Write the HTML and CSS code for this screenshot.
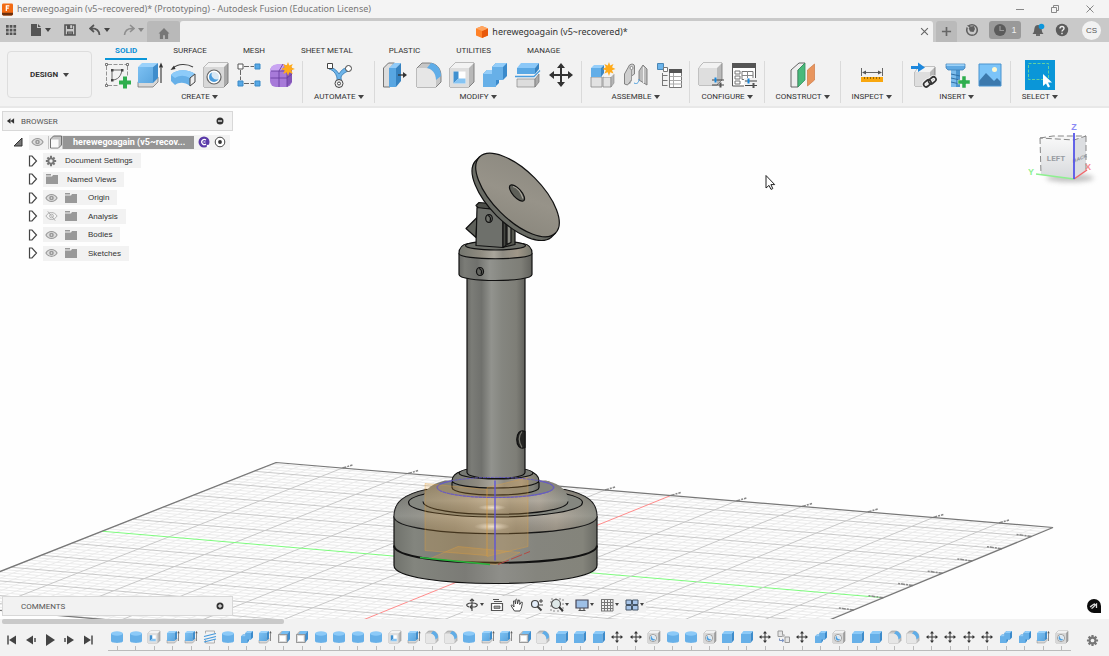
FILE: index.html
```html
<!DOCTYPE html>
<html lang="en">
<head>
<meta charset="utf-8">
<title>herewegoagain (v5~recovered)* (Prototyping) - Autodesk Fusion (Education License)</title>
<link rel="stylesheet" href="styles.css">
</head>
<body>
<svg class="sprite" aria-hidden="true">
  <defs>
    <linearGradient id="gBlue" x1="0" y1="0" x2="1" y2="1"><stop offset="0" stop-color="#7cc0f2"/><stop offset="1" stop-color="#5ba6df"/></linearGradient>
  </defs>
  <symbol id="i-sketch" viewBox="0 0 28 28">
    <path d="M5 3.500h18M3.500 5v18M5 24.500h11M24.500 5v10" fill="none" stroke="#888" stroke-width=".9" stroke-dasharray="4 1.500"/>
    <path d="M2.500 2.500h2v2h-2zM23.500 2.500h2v2h-2zM2.500 23.500h2v2h-2z" fill="#fff" stroke="#666" stroke-width=".9"/>
    <path d="M9 9h10c-1 6-4 10-10 10z" fill="none" stroke="#666" stroke-width="1"/>
    <path d="M8 8h2.500v2.500H8zM18 8h2.500v2.500H18zM8 18h2.500v2.500H8z" fill="#444"/>
    <path d="M20 15.500h4v4h4v4h-4v4h-4v-4h-4v-4h4z" fill="#2fae4e"/>
  </symbol>
  <symbol id="i-extrude" viewBox="0 0 28 28">
    <path d="M2 21l4-5h16v5l-5 5H2z" fill="#d8d8d8" stroke="#777" stroke-width=".8"/>
    <path d="M2 6h15v16H2z" fill="url(#gBlue)"/><path d="M2 6l4-4h16l-5 4z" fill="#9bd2fb"/><path d="M17 6l5-4v15l-5 5z" fill="#3e8dcc"/>
    <path d="M25 22V4M23.500 6.500l1.500-3.500 1.500 3.500" fill="none" stroke="#333" stroke-width="1.100"/>
  </symbol>
  <symbol id="i-revolve" viewBox="0 0 28 28">
    <path d="M2 14C7 8 19 8 26 13l-5 3v9C16 21 10 21 6 24L2 20z" fill="#67b0e8"/>
    <path d="M2 14C7 8 19 8 26 13l-5 4C15 14 11 14 6 17z" fill="#8dcbf9"/>
    <path d="M21 17l5-4v8l-5 4z" fill="#eee" stroke="#444"/>
    <path d="M4 7c5-4.500 14-4.500 20-1" fill="none" stroke="#444" stroke-width="1.200"/><path d="M1.500 9L5 4.500 6.500 8z" fill="#333"/>
  </symbol>
  <symbol id="i-hole" viewBox="0 0 28 28">
    <path d="M2 6l4-4h20v20l-4 4H2z" fill="#a8a8a8" stroke="#777" stroke-width=".9"/>
    <path d="M2 6h20v20H2z" fill="#d8d8d8"/><path d="M2 6l4-4h20l-4 4z" fill="#f1f1f1"/>
    <circle cx="12" cy="16" r="7" fill="#fff" stroke="#666" stroke-width="1.200"/><circle cx="12" cy="16" r="5" fill="#d9e8f4"/><path d="M10 11.400a5 5 0 0 0 6.600 6.600 5 5 0 0 1-6.600 2.500 5 5 0 0 1 0-9.100z" fill="#4b9ddd"/>
  </symbol>
  <symbol id="i-pattern" viewBox="0 0 28 28">
    <path d="M9 5.500h10M5.500 9v10M9 22.500h10" stroke="#666" stroke-dasharray="5 1.500" fill="none"/>
    <path d="M3 3h5v5H3z" fill="#fff" stroke="#555"/><path d="M20 3h5v5h-5zM3 20h5v5H3zM20 20h5v5h-5z" fill="#58a9e6" stroke="#3b89c6"/>
  </symbol>
  <symbol id="i-form" viewBox="0 0 28 28">
    <rect x="2" y="4" width="22" height="22" rx="6" fill="#a77ad9"/><path d="M2 11c0-6 4-8 9-8h6l-4 7H3z" fill="#c9a5f2"/><path d="M19 10l5-4v15l-5 5z" fill="#8456b8"/>
    <path d="M2.500 17h16.500l5-4M11 10v16M3 10h16v16M11 10l4-7" fill="none" stroke="#6b3fa0" stroke-width=".9"/>
    <path d="M20 1l1.300 3.600 3.500-1.600-1.500 3.500L27 8l-3.700 1.300 1.500 3.600-3.500-1.600L20 15l-1.300-3.700-3.500 1.600 1.500-3.600L13 8l3.700-1.500L15.200 3l3.500 1.600z" fill="#ffab1a"/>
  </symbol>
  <symbol id="i-automate" viewBox="0 0 28 28">
    <path d="M4 5c4 2 8 4 10 8 2-3 4-6 8-6l1 3c-4 2-7 4-7 7l1 6h-5l0-6C11 12 8 9 4 8z" fill="#6db4e9" stroke="#3b7fb5" stroke-width=".9"/>
    <path d="M2.500 2.500h5v5h-5z" fill="#fff" stroke="#444"/><circle cx="23.500" cy="7.500" r="3" fill="#fff" stroke="#444"/><circle cx="14" cy="22.500" r="4" fill="#eee" stroke="#444"/><circle cx="14" cy="22.500" r="1.500" fill="#fff" stroke="#444"/>
  </symbol>
  <symbol id="i-presspull" viewBox="0 0 28 28">
    <path d="M1.500 7l5-5h6L8 7v19H1.500z" fill="#ddd" stroke="#666" stroke-width=".9"/>
    <path d="M7 7h7v19H7z" fill="#58a6e2"/><path d="M7 7l5-5h7l-5 5z" fill="#8fcaf8"/><path d="M14 7l5-5v18l-5 6z" fill="#3682c0"/>
    <path d="M16 14h7" stroke="#333" stroke-width="1.300"/><path d="M21 11l4 3-4 3z" fill="#333"/>
  </symbol>
  <symbol id="i-fillet" viewBox="0 0 28 28">
    <path d="M2 26V7l5-5h7c7 0 12 5 12 13v6l-5 5z" fill="#c7c7c7" stroke="#777" stroke-width=".9"/>
    <path d="M2 7h8c7 0 11 5 11 12v7H2z" fill="#e6e6e6"/><path d="M12 7l4-5c6 1 10 6 10 13l-5 4C21 12 17 8 12 7z" fill="#5fade8"/>
  </symbol>
  <symbol id="i-shell" viewBox="0 0 28 28">
    <path d="M2 7l5-5h19v19l-5 5H2z" fill="#b8b8b8" stroke="#777" stroke-width=".9"/><path d="M2 7h19v19H2z" fill="#dedede"/><path d="M2 7l5-5h19l-5 5z" fill="#f3f3f3"/>
    <path d="M5.500 10.500h12v12h-12z" fill="#fff"/><path d="M5.500 10.500h5v7l-5 5z" fill="#3f90d0"/><path d="M10.500 17.500h7v5h-12z" fill="#86c4f3"/>
  </symbol>
  <symbol id="i-combine" viewBox="0 0 28 28">
    <path d="M2 13l4-4h5V6l4-4h11v13l-4 4h-4v3l-4 4H2z" fill="#3b8acb"/>
    <path d="M2 13h9V6h11v13h-7v7H2z" fill="#67b0e8"/><path d="M2 13l4-4h5v4zM11 6l4-4h11l-4 4z" fill="#93cdf9"/>
  </symbol>
  <symbol id="i-split" viewBox="0 0 28 28">
    <path d="M3 7h18v6H3z" fill="#5aa8e4"/><path d="M3 7l4-5h18l-4 5z" fill="#8bc8f8"/><path d="M21 7l4-5v6l-4 5z" fill="#3683c2"/>
    <path d="M1 15.500h19l6-6" fill="none" stroke="#4a9ddd" stroke-width="1.300"/>
    <path d="M3 18h18v8H3z" fill="#ddd" stroke="#888" stroke-width=".7"/><path d="M21 18l4-5v8l-4 5z" fill="#aaa" stroke="#777" stroke-width=".7"/>
  </symbol>
  <symbol id="i-move" viewBox="0 0 28 28">
    <path d="M14 5v18M5 14h18" stroke="#333" stroke-width="2"/><path d="M14 2l4 5h-8zM14 26l4-5h-8zM2 14l5-4v8zM26 14l-5-4v8z" fill="#333"/>
  </symbol>
  <symbol id="i-component" viewBox="0 0 28 28">
    <path d="M2 16h11v10H2zM14 16h8v10h-8z" fill="#e2e2e2" stroke="#888" stroke-width=".8"/><path d="M22 16l3-3v9l-3 4z" fill="#b5b5b5" stroke="#888" stroke-width=".6"/><path d="M14 16l3-3h8l-3 3z" fill="#f4f4f4"/>
    <path d="M2 7h10v9H2z" fill="#62aee8"/><path d="M2 7l3-3h10l-3 3z" fill="#95cefa"/><path d="M12 7l3-3v8l-3 4z" fill="#3a87c6"/>
    <path d="M20 1l1.200 3.500 3.300-1.500L23 6.300 26.500 8 23 9.300l1.500 3.200-3.300-1.200L20 15l-1.300-3.700-3.300 1.200 1.500-3.200L13.500 8l3.400-1.700L15.400 3l3.300 1.500z" fill="#ffab1a"/>
  </symbol>
  <symbol id="i-joint" viewBox="0 0 28 28">
    <path d="M2.500 23V13l5-9c2-1.500 5-1 5 1v8l-3 2v4l-4 5z" fill="#cfcfcf" stroke="#777" stroke-width=".9"/><path d="M7.500 23l2-4V9" fill="none" stroke="#999"/><circle cx="9.500" cy="7" r="1.500" fill="#fff" stroke="#777" stroke-width=".8"/>
    <path d="M25 24V8l-4-4-4 6v9z" fill="#bdbdbd" stroke="#777" stroke-width=".9"/><path d="M21.500 6v16" stroke="#eee"/><path d="M12 22c4 2 5-2 5-4" fill="none" stroke="#4a9ddd"/>
  </symbol>
  <symbol id="i-bom" viewBox="0 0 28 28">
    <path d="M2.500 2.500h6v6h-6z" fill="#6cb5ec" stroke="#4a86b4"/><path d="M8.500 6.500h4v4h-4z" fill="#fff" stroke="#777"/>
    <path d="M7.500 12v13M7.500 14.500h5M7.500 19.500h5M7.500 24.500h5" stroke="#777" fill="none"/>
    <path d="M14.500 8.500h12v18h-12z" fill="#fff" stroke="#777"/><path d="M14 8h13v4H14z" fill="#555"/><path d="M15 15.500h12M15 19.500h12M15 23h12M18.500 12v14" stroke="#aaa"/>
  </symbol>
  <symbol id="i-config" viewBox="0 0 28 28">
    <path d="M2 7l4-5h19v17l-5 5H2z" fill="#bababa" stroke="#777" stroke-width=".8"/><path d="M2 7h18v17H2z" fill="#dedede"/><path d="M2 7l4-5h19l-5 5z" fill="#f2f2f2"/>
    <path d="M15 19h12M15 24h12" stroke="#444" stroke-width="1.200"/><path d="M18.500 16.500v5" stroke="#1687dc" stroke-width="2"/><path d="M23.500 21.500v5" stroke="#555" stroke-width="2"/>
  </symbol>
  <symbol id="i-table" viewBox="0 0 28 28">
    <path d="M2.500 3v22h23V3z" fill="#fff" stroke="#555"/><path d="M2 2h24v5H2z" fill="#555"/><path d="M5 10h5v3H5zM5 15h5v3H5zM5 20h5v3H5zM12 10.500h11v8H12z" fill="none" stroke="#777"/><path d="M12 14.500h11M17.500 10v8" stroke="#888"/>
    <path d="M14 17h13v11H14z" fill="#f2f2f2"/><path d="M15 20h12M15 24.500h12" stroke="#444" stroke-width="1.200"/><path d="M18.500 17.500v5" stroke="#1687dc" stroke-width="2"/><path d="M23.500 22v5" stroke="#555" stroke-width="2"/>
  </symbol>
  <symbol id="i-plane" viewBox="0 0 28 28">
    <path d="M2 9l8-7h6l-7 7v17H2z" fill="#eee" stroke="#555" stroke-width=".9"/><path d="M9 9l7-7v17l-7 7z" fill="#49b97b" stroke="#35915e" stroke-width=".8"/><path d="M18.500 9l7-6v16l-7 6z" fill="#e8955e" stroke="#cf7a45" stroke-width=".7"/>
  </symbol>
  <symbol id="i-measure" viewBox="0 0 28 28">
    <path d="M3.500 7v8M24.500 7v8M5 11.500h18" stroke="#666" fill="none"/><path d="M4 11.500l4-2v4zM24 11.500L20 9.500v4z" fill="#555"/>
    <path d="M3 16h22v5H3z" fill="#f9a70e"/><path d="M6.500 16v2M9.500 16v2M12.500 16v2M15.500 16v2M18.500 16v2M21.500 16v2" stroke="#9a6800"/>
  </symbol>
  <symbol id="i-derive" viewBox="0 0 28 28">
    <path d="M5 11l4-5h16v15l-5 4H5z" fill="#b8b8b8" stroke="#777" stroke-width=".8"/><path d="M5 11h15v14H5z" fill="#dedede"/><path d="M5 11l4-5h16l-5 5z" fill="#f3f3f3"/>
    <path d="M1 5h7V1.500L15 6.500 8 11V8H1z" fill="#1e88dd"/>
    <g fill="none" stroke="#f2f2f2" stroke-width="4"><rect x="13" y="20" width="8" height="5" rx="2.500" transform="rotate(-40 17 22)"/><rect x="18" y="17" width="8" height="5" rx="2.500" transform="rotate(-40 22 19)"/></g>
    <g fill="none" stroke="#333" stroke-width="1.700"><rect x="13" y="20" width="8" height="5" rx="2.500" transform="rotate(-40 17 22)"/><rect x="18" y="17" width="8" height="5" rx="2.500" transform="rotate(-40 22 19)"/></g>
  </symbol>
  <symbol id="i-fastener" viewBox="0 0 28 28">
    <path d="M8 8h9v18H8z" fill="#7dbdec"/><path d="M13 8h4v18h-4z" fill="#4b95cf"/><path d="M8 13l9 2M8 17l9 2M8 21l9 2" stroke="#2f6fa5"/>
    <path d="M3 3h19v4l-2 2H5L3 7z" fill="#60a9e2" stroke="#387ab2" stroke-width=".7"/><path d="M3.500 3.300h18v1.700h-18z" fill="#9dd1f7"/>
    <path d="M19 15h4v4h4v4h-4v4h-4v-4h-4v-4h4z" fill="#2fae4e" stroke="#f2f2f2" stroke-width=".5"/>
  </symbol>
  <symbol id="i-image" viewBox="0 0 28 28">
    <path d="M3 3h22v22H3z" fill="#7cc4f8"/><path d="M3 20l7-8 8 8 3-3 4 4v4H3z" fill="#3c79ad"/><circle cx="18.500" cy="8.500" r="2.500" fill="#fff8cf"/><path d="M3 3h22v22H3z" fill="none" stroke="#4a94cf"/>
  </symbol>
  <symbol id="i-cube" viewBox="0 0 28 28"><path d="M2 8h19v18H2z" fill="#67b0e8"/><path d="M2 8l5-6h19l-5 6z" fill="#8ccaf8"/><path d="M21 8l5-6v18l-5 6z" fill="#3c8bcb"/></symbol>
  <symbol id="i-cyl" viewBox="0 0 28 28"><path d="M2 7v15c0 5 24 5 24 0V7z" fill="#67b0e8"/><ellipse cx="14" cy="7" rx="12" ry="4.500" fill="#8ccaf8"/></symbol>
  <symbol id="i-thread" viewBox="0 0 28 28"><path d="M5 2h18M5 26h18M5 2v5M23 2v5M5 20v6M23 20v6" stroke="#999" stroke-width="1.500" fill="none"/><path d="M2 13l24-6M2 19l24-6M2 24l24-6" stroke="#4499dd" stroke-width="2.500"/></symbol>
  <symbol id="i-frame" viewBox="0 0 28 28"><path d="M2 9l7-7h17v16l-6 8H2z" fill="#bbb"/><path d="M11 2h15l-6 7H6z" fill="#77bef3"/><path d="M20 9l6-7v16l-6 7z" fill="#3f8ed0"/><path d="M3 9h17v16H3z" fill="#ddd" stroke="#888" stroke-width="1.500"/><path d="M6 12h11v10H6z" fill="#fff"/></symbol>
  <symbol id="i-asbuilt" viewBox="0 0 28 28"><path d="M2 2h9v11H2zM16 14h9v11h-9z" fill="#e5e5e5" stroke="#999" stroke-width="2"/><circle cx="13" cy="11" r="3" fill="#bbb"/><path d="M5 17v4h8M10 18l4 3-4 3" fill="none" stroke="#7992c2" stroke-width="2"/></symbol>
  <symbol id="i-eye" viewBox="0 0 14 10"><path d="M1 5c3-5 9-5 12 0-3 5-9 5-12 0z" fill="#ddd" stroke="#999" stroke-width="1.200"/><circle cx="7" cy="5" r="2.500" fill="#999"/><circle cx="7" cy="5" r=".8" fill="#eee"/></symbol>
  <symbol id="i-eyeoff" viewBox="0 0 14 10"><path d="M1 5c3-5 9-5 12 0-3 5-9 5-12 0z" fill="#f4f4f4" stroke="#aaa"/><circle cx="7" cy="5" r="2" fill="none" stroke="#aaa"/><path d="M3 0l8 10" stroke="#aaa"/></symbol>
  <symbol id="i-folder" viewBox="0 0 14 12"><path d="M1 1h5v1.500H1zM1 3.500h6l1-1.500h5v9H1z" fill="#999"/></symbol>
  <symbol id="i-gear" viewBox="0 0 14 14"><g stroke="#777" stroke-width="2.400"><path d="M7 1v12M1 7h12M2.800 2.800l8.400 8.400M11.200 2.800l-8.400 8.400"/></g><circle cx="7" cy="7" r="4.200" fill="#777"/><circle cx="7" cy="7" r="2" fill="#f2f2f2"/></symbol>
  <symbol id="i-tri" viewBox="0 0 10 12"><path d="M1.500 1h2.500l4.500 5-4.500 5H1.500z" fill="#fff" stroke="#444" stroke-width="1.200"/></symbol>
</svg>

<header class="titlebar">
  <svg class="app-icon" viewBox="0 0 12 13"><rect x="0" y="0" width="12" height="13" rx="1.500" fill="#f26a13"/><path d="M0 10h12v1.500a1.500 1.500 0 0 1-1.500 1.500h-9A1.500 1.500 0 0 1 0 11.500z" fill="#6d2f0c"/><path d="M4.700 8V2.500H8M4.700 5h2.700" stroke="#fff" stroke-width="1.300" fill="none"/></svg>
  <h1 class="window-title">herewegoagain (v5~recovered)* (Prototyping) - Autodesk Fusion (Education License)</h1>
  <div class="window-controls">
    <button aria-label="Minimize"><svg viewBox="0 0 10 10"><path d="M1 5.500h8"/></svg></button>
    <button aria-label="Restore"><svg viewBox="0 0 10 10"><path d="M1.500 3.500h5v5h-5zM3.500 3V1.500h5v5H7"/></svg></button>
    <button aria-label="Close"><svg viewBox="0 0 10 10"><path d="M1.500 1.500l7 7M8.500 1.500l-7 7"/></svg></button>
  </div>
</header>

<div class="tabbar">
  <div class="quick">
    <button aria-label="Data panel"><svg viewBox="0 0 12 12"><path d="M1 1h2.700v2.700H1zM4.700 1h2.700v2.700H4.700zM8.400 1h2.700v2.700H8.400zM1 4.700h2.700v2.700H1zM4.700 4.700h2.700v2.700H4.700zM8.400 4.700h2.700v2.700H8.400zM1 8.400h2.700v2.700H1zM4.700 8.400h2.700v2.700H4.700zM8.400 8.400h2.700v2.700H8.400z" fill="#555"/></svg></button>
    <button aria-label="File"><svg viewBox="0 0 12 12"><path d="M1 0h6v4h4v8H1zM8 0l3 3H8z" fill="#555"/></svg><i class="caret"></i></button>
    <button aria-label="Save"><svg viewBox="0 0 12 12"><path d="M1 1h10v10H1z" fill="none" stroke="#555" stroke-width="1.600"/><path d="M3 1h6v4H3zM3 7.500h6V11H3z" fill="#555"/><path d="M6.500 1.500H8V4H6.500zM4 9h4" fill="#ccc" stroke="#ccc" stroke-width=".6"/></svg></button>
    <button aria-label="Undo"><svg viewBox="0 0 12 12"><path d="M5 1L1 4.500 5 8M1.500 4.500C7 4 10 6 10.500 11" fill="none" stroke="#555" stroke-width="1.700"/></svg><i class="caret"></i></button>
    <button class="faded" aria-label="Redo"><svg viewBox="0 0 12 12"><path d="M7 1l4 3.500L7 8M10.500 4.500C5 4 2 6 1.500 11" fill="none" stroke="#555" stroke-width="1.600"/></svg><i class="caret"></i></button>
  </div>
  <button class="home-tab" aria-label="Home"><svg viewBox="0 0 12 12"><path d="M6 0l6 6h-1.500v6H7V8H5v4H1.500V6H0z" fill="#777"/></svg></button>
  <div class="doc-tab">
    <div class="doc-name"><svg viewBox="0 0 12 12"><path d="M6 0l6 2.500v7L6 12 0 9.500v-7z" fill="#ff8228"/><path d="M6 5l6-2.500v7L6 12z" fill="#e8590c"/><path d="M6 0l6 2.500L6 5 0 2.500z" fill="#ffa45f"/></svg><span>herewegoagain (v5~recovered)*</span></div>
    <button class="doc-close" aria-label="Close document"><svg viewBox="0 0 8 8"><path d="M1 1l6 6M7 1L1 7" stroke="#666" stroke-width="1"/></svg></button>
  </div>
  <div class="status">
    <button class="new-tab" aria-label="New tab"><svg viewBox="0 0 12 12"><path d="M6 1v10M1 6h10" stroke="#666" stroke-width="1.800"/></svg></button>
    <button aria-label="Extensions"><svg viewBox="0 0 14 14"><circle cx="7" cy="7" r="5.300" fill="none" stroke="#606060" stroke-width="1.600"/><path d="M2 2l4 1.500 3-.5 1 3-1.500 3L5 8.500 4 6z" fill="#606060"/><path d="M1 2.500L4 5M8 11l2-2" stroke="#c9c9c9" stroke-width="1.500"/></svg></button>
    <button class="jobs" aria-label="Job status"><svg viewBox="0 0 14 14"><circle cx="7" cy="7" r="6" fill="#5b5b5b"/><path d="M7 3v4.500h4" fill="none" stroke="#999" stroke-width="1.200"/></svg><span>1</span></button>
    <button aria-label="Notifications"><svg viewBox="0 0 14 14"><path d="M1.500 11c2-2 1.500-4 2-6C4 3 5 2 7 2s3 1 3.500 3c.5 2 0 4 2 6z" fill="#606060"/><path d="M5 12h4" stroke="#606060" stroke-width="1.800"/><circle cx="10.500" cy="3.500" r="2.800" fill="#0d96dc"/></svg></button>
    <button aria-label="Help"><svg viewBox="0 0 14 14"><circle cx="7" cy="7" r="6.200" fill="#5b5b5b"/><path d="M5 5.500c0-2.600 4-2.600 4 0 0 1.500-2 1.500-2 3M7 9.700v1.500" fill="none" stroke="#eee" stroke-width="1.400"/></svg></button>
    <button class="avatar">CS</button>
  </div>
</div>

<div class="ribbon">
  <button class="workspace">DESIGN<i class="caret"></i></button>
  <div class="ribbon-main">
    <nav class="ribbon-tabs">
      <a class="active" href="#solid">SOLID</a><a href="#surface">SURFACE</a><a href="#mesh">MESH</a><a href="#sheet">SHEET METAL</a><a href="#plastic">PLASTIC</a><a href="#utilities">UTILITIES</a><a href="#manage">MANAGE</a>
    </nav>
    <div class="groups" id="groups"></div>
  </div>
</div>

<main class="viewport">
  <svg class="scene" viewBox="0 107 1109 512" preserveAspectRatio="xMidYMid slice" role="img" aria-label="Lamp stand model on a ground grid">
    <defs>
      <linearGradient id="m-col"><stop offset="0" stop-color="#696a66"/><stop offset=".08" stop-color="#7b7c77"/><stop offset=".25" stop-color="#70716d"/><stop offset=".42" stop-color="#92938e"/><stop offset=".6" stop-color="#858680"/><stop offset=".85" stop-color="#7e7e77"/><stop offset="1" stop-color="#62625d"/></linearGradient>
      <linearGradient id="m-base"><stop offset="0" stop-color="#70726c"/><stop offset=".1" stop-color="#83857e"/><stop offset=".35" stop-color="#7b7b76"/><stop offset=".52" stop-color="#8e8e89"/><stop offset=".7" stop-color="#85857e"/><stop offset=".93" stop-color="#84847b"/><stop offset="1" stop-color="#696a64"/></linearGradient>
      <linearGradient id="m-dome"><stop offset="0" stop-color="#74766f"/><stop offset=".3" stop-color="#8f8b80"/><stop offset=".48" stop-color="#aaa69c"/><stop offset=".6" stop-color="#8e8b82"/><stop offset=".8" stop-color="#a09788"/><stop offset="1" stop-color="#77786e"/></linearGradient>
      <linearGradient id="m-shade" x2="0" y2="1"><stop offset="0" stop-color="#555" stop-opacity=".25"/><stop offset=".6" stop-color="#fff" stop-opacity=".18"/><stop offset="1" stop-color="#444" stop-opacity=".12"/></linearGradient>
      <radialGradient id="m-glint"><stop offset="0" stop-color="#fff" stop-opacity=".8"/><stop offset="1" stop-color="#fff" stop-opacity="0"/></radialGradient>
      <linearGradient id="m-disc" x1="0" y1="0" x2="1" y2="1"><stop offset="0" stop-color="#8b887f"/><stop offset=".5" stop-color="#979389"/><stop offset="1" stop-color="#88857b"/></linearGradient>
    </defs>
    <g id="grid"></g>
    <g stroke="#111" stroke-width="1.200" stroke-linejoin="round">
      <path d="M394 516v49c0 24 203 24 203 0v-49z" fill="url(#m-base)"/>
      <path d="M394 545c0 23 203 23 203 0" fill="none" stroke-width="2"/>
      <path d="M394 516c0-14 9-22 32-27l139 0c23 5 32 13 32 27 0 23-203 23-203 0z" fill="url(#m-dome)"/>
      <path d="M394 516c0-14 9-22 32-27l139 0c23 5 32 13 32 27 0 23-203 23-203 0z" fill="url(#m-shade)" stroke="none"/>
      <ellipse cx="495.500" cy="502" rx="87" ry="14.500" fill="#858780"/>
      <path d="M423 501c0-10 6-17 22-21l101 0c16 4 22 11 22 21 0 17-145 17-145 0z" fill="url(#m-dome)" stroke="none"/>
      <path d="M423 501c0-10 6-17 22-21l101 0c16 4 22 11 22 21 0 17-145 17-145 0z" fill="url(#m-shade)" stroke="none"/>
      <path d="M423 501c0 17 145 17 145 0" fill="none"/>
      <ellipse cx="495.500" cy="487" rx="58" ry="10" fill="#83847c" stroke="#6a62b8"/>
      <path d="M452 487c0 10 87 10 87 0v-5h-87z" fill="url(#m-base)"/>
      <path d="M452 480c0-4 4-8 9-9h69c5 1 9 5 9 9 0 10-87 10-87 0z" fill="url(#m-dome)"/>
      <ellipse cx="496" cy="472.500" rx="37" ry="6" fill="#777973"/>
      <ellipse cx="492" cy="526" rx="18" ry="4" fill="url(#m-glint)" stroke="none"/>
      <ellipse cx="492" cy="507" rx="14" ry="3" fill="url(#m-glint)" stroke="none"/>
      <path d="M467 272v200c0 8 58 8 58 0V272z" fill="url(#m-col)"/>
      <path d="M525 431c-11-5-11 21 0 16z" fill="#252523"/><path d="M522 431c-4 5-3 11 0 16" fill="none" stroke="#77776f"/>
      <path d="M459 253v21c0 8 73 8 73 0v-21z" fill="url(#m-col)"/>
      <path d="M459 253c0-5 3-9 9-10h55c6 1 9 5 9 10 0 7-73 7-73 0z" fill="url(#m-dome)"/>
      <ellipse cx="495.500" cy="245" rx="30" ry="4.500" fill="#6d6f69"/>
      <ellipse cx="480" cy="271" rx="3.500" ry="4" fill="#63645f"/><path d="M479 268c3 1 3 3 2 6" fill="none" stroke-width="1.200"/>
      <path d="M477 217l-11 11 10 9z" fill="#5e605a"/>
      <path d="M502 210l13 8v26l-13 3z" fill="#55574f"/><path d="M507 225v19l4-2v-17z" fill="#8a8b83"/>
      <path d="M476 205l3-3 24 2v4h-24z" fill="#4d4f4a"/>
      <path d="M477 207l26 3v37l-27-2z" fill="#6e706b"/><path d="M503 212l3 3v30l-3 2z" fill="#464843"/>
      <ellipse cx="489" cy="218" rx="3.300" ry="3.900" fill="#70726c"/><path d="M488 215c3 1 3 3 2 6" fill="none" stroke-width="1.200"/>
      <path d="M479.500 156.500l-4.500 4.500A53.800 24.200 45 0 0 551 237l4.500-4.500z" fill="#696b64"/>
      <ellipse cx="517.500" cy="194.500" rx="53.800" ry="24.200" transform="rotate(45 517.500 194.500)" fill="url(#m-disc)"/>
      <ellipse cx="517" cy="192.500" rx="10.200" ry="4.300" transform="rotate(48 517 192.500)" fill="#5e5f58"/>
      <path d="M513 186c4 1 8 6 10 12" fill="none" stroke="#aaa69c"/>
    </g>
    <g fill="#e9a63a" fill-opacity=".22" stroke="#e2a03a" stroke-opacity=".45" stroke-width=".8">
      <path d="M425 483l62 6v66l-62-5z"/><path d="M487 487l41-10v69l-41 10z"/><path d="M430 558l28-12 62 6-24 12z"/>
    </g>
    <g fill="none">
      <path d="M437 487a58 10 0 0 0 117 0 58 10 0 0 0-117 0" stroke="#665bc2" stroke-dasharray="3 1"/>
      <path d="M495 480v80" stroke="#5a50df" stroke-width="1.300"/><path d="M420 557l70 7" stroke="#28b43c" stroke-width="1.300"/><path d="M498 564l32-13" stroke="#b34a43" stroke-dasharray="12 2"/>
    </g>
    <path d="M766 175v12.500l3-2.600 2 4 1.800-.8-1.900-4h3.800z" fill="#fff" stroke="#222" stroke-width="1"/>
  </svg>

  <svg class="viewcube" viewBox="0 0 72 68" role="img" aria-label="View cube">
    <defs><linearGradient id="vc" x2="0" y2="1"><stop offset="0" stop-color="#f8f8f8"/><stop offset="1" stop-color="#d7d9dc"/></linearGradient><filter id="soft" x="-30%" y="-60%" width="160%" height="220%"><feGaussianBlur stdDeviation="2.500"/></filter></defs>
    <ellipse cx="42" cy="57" rx="24" ry="4" fill="#999" opacity=".6" filter="url(#soft)"/>
    <path d="M12 17l13-2h33l-12 4z" fill="#f6f6f6"/><path d="M12 17l34 2v39l-33-4z" fill="url(#vc)"/><path d="M46 19l12-4v34l-12 9z" fill="#dcdee1"/>
    <path d="M12 17l13-2h33l-12 4zM12 17l1 37M58 15v34" fill="none" stroke="#888" stroke-dasharray="6 3"/>
    <text x="28" y="40" text-anchor="middle" class="vc-face">LEFT</text><text x="52" y="39" text-anchor="middle" class="vc-side" transform="skewY(-22)" transform-origin="52 39">BACK</text>
    <path d="M8 53l38 5" stroke="#8df08f" stroke-width="1.500"/><path d="M46 58l13-9" stroke="#f0666a" stroke-width="1.500"/><path d="M46 12v46" stroke="#5555e8" stroke-width="1.800"/>
    <text x="46" y="9" text-anchor="middle" class="vc-axis" fill="#8a8af5">Z</text><text x="3" y="54" text-anchor="middle" class="vc-axis" fill="#8df08f">Y</text><text x="60" y="49" text-anchor="middle" class="vc-axis" fill="#f58a8c">X</text>
  </svg>

  <aside class="browser">
    <div class="panel-head"><svg class="collapse" viewBox="0 0 10 8"><path d="M5 1v6L1 4zM9 1v6L5 4z" fill="#333"/></svg><span>BROWSER</span><button aria-label="Collapse browser"><svg viewBox="0 0 8 8"><circle cx="4" cy="4" r="3.500" fill="#333"/><path d="M2 4h4" stroke="#fff" stroke-width="1.200"/></svg></button></div>
    <ul class="tree">
      <li class="root"><svg class="root-tri" viewBox="0 0 10 10"><path d="M9 1v8H1z" fill="#777" stroke="#333"/></svg><span class="row"><svg class="eye"><use href="#i-eye"/></svg><span class="selected"><svg class="part" viewBox="0 0 14 14"><path d="M0 0h14v14H0z" fill="#f2f2f2"/><path d="M2 4l3-3h8v9l-3 3H2z" fill="#c4c4c4" stroke="#555" stroke-width=".8"/><path d="M2.500 4.500h7.500v8H2.500z" fill="#fafafa"/></svg><b>herewegoagain (v5~recov...</b></span><svg class="badge" viewBox="0 0 12 12"><circle cx="6" cy="6" r="5.500" fill="#5a3aa8"/><path d="M8 4a2.600 2.600 0 1 0 0 4M5.500 6h2" fill="none" stroke="#fff" stroke-width="1.200"/><circle cx="10" cy="10" r="1.300" fill="#fff"/></svg><svg class="badge" viewBox="0 0 12 12"><circle cx="6" cy="6" r="4.800" fill="#fff" stroke="#444"/><circle cx="6" cy="6" r="1.900" fill="#333"/></svg></span></li>
      <li><svg class="tri"><use href="#i-tri"/></svg><span class="row"><svg class="gear"><use href="#i-gear"/></svg><span class="name">Document Settings</span></span></li>
      <li><svg class="tri"><use href="#i-tri"/></svg><span class="row"><svg class="folder"><use href="#i-folder"/></svg><span class="name">Named Views</span></span></li>
      <li><svg class="tri"><use href="#i-tri"/></svg><span class="row"><svg class="eye"><use href="#i-eye"/></svg><svg class="folder"><use href="#i-folder"/></svg><span class="name wide">Origin</span></span></li>
      <li><svg class="tri"><use href="#i-tri"/></svg><span class="row"><svg class="eye"><use href="#i-eyeoff"/></svg><svg class="folder"><use href="#i-folder"/></svg><span class="name wide">Analysis</span></span></li>
      <li><svg class="tri"><use href="#i-tri"/></svg><span class="row"><svg class="eye"><use href="#i-eye"/></svg><svg class="folder"><use href="#i-folder"/></svg><span class="name wide">Bodies</span></span></li>
      <li><svg class="tri"><use href="#i-tri"/></svg><span class="row"><svg class="eye"><use href="#i-eye"/></svg><svg class="folder"><use href="#i-folder"/></svg><span class="name wide">Sketches</span></span></li>
    </ul>
  </aside>

  <div class="panel-head comments"><span>COMMENTS</span><button aria-label="Expand comments"><svg viewBox="0 0 8 8"><circle cx="4" cy="4" r="3.500" fill="#333"/><path d="M2 4h4M4 2v4" stroke="#fff"/></svg></button></div>

  <div class="navbar">
    <button aria-label="Orbit"><svg viewBox="0 0 14 14"><path d="M7 1v12M5 3l2-2 2 2" fill="none" stroke="#444" stroke-width="1.100"/><path d="M4 9C-1 7 3 5 7 5s8 2 3 4H5M7 7L5 9l2 2" fill="none" stroke="#444" stroke-width="1.100"/></svg><i class="caret"></i></button>
    <button aria-label="Look at"><svg viewBox="0 0 14 14"><path d="M1.500 5.500h11v7h-11zM4 3.500h8M3 1.500h6" fill="#fff" stroke="#555" stroke-width="1.200"/><path d="M4 8h6v2.500H4z" fill="#999" stroke="#555" stroke-width=".7"/></svg></button>
    <button aria-label="Pan"><svg viewBox="0 0 14 14"><path d="M4.500 13C3 11 2 9 1 7.500c1-1 2 0 3 1.500L3.500 3c1-1 1.500 0 2 3l.3-4.500c1-1 1.600 0 1.700 4.500L8.500 2c1-.7 1.500.3 1.200 4.500L11.500 4c1-.3 1 .5.500 3-.5 3-1 4-2 6z" fill="#fff" stroke="#444"/></svg></button>
    <button aria-label="Zoom"><svg viewBox="0 0 14 14"><circle cx="5" cy="6" r="3.500" fill="#e4eefa" stroke="#444" stroke-width="1.200"/><path d="M7.500 8.500l4 4" stroke="#444" stroke-width="2"/><path d="M11 1v4M9 3h4M9 7h4" stroke="#444"/></svg></button>
    <button aria-label="Fit"><svg viewBox="0 0 14 14"><path d="M1 1h12v12H1z" fill="none" stroke="#888" stroke-dasharray="2 2"/><circle cx="6" cy="6" r="4.500" fill="#dfe9e9" stroke="#555" stroke-width="1.200"/><path d="M9 9l4 4" stroke="#333" stroke-width="2"/></svg><i class="caret"></i></button>
    <button aria-label="Display settings"><svg viewBox="0 0 14 14"><path d="M1 2h12v8H1z" fill="#9dbfe6" stroke="#445" stroke-width="1.200"/><path d="M5 10v2.500h4V10M3.500 12.500h7" fill="none" stroke="#555" stroke-width="1.200"/></svg><i class="caret"></i></button>
    <button aria-label="Grid and snaps"><svg viewBox="0 0 14 14"><path d="M1.500 1v12M4.500 1v12M7.500 1v12M10.500 1v12M13 1v12M1 1.500h12M1 4.500h12M1 7.500h12M1 10.500h12M1 13h12" stroke="#777"/></svg><i class="caret"></i></button>
    <button aria-label="Viewports"><svg viewBox="0 0 14 14"><path d="M1 2h5.500v4.500H1zM7.500 2H13v4.500H7.500zM1 7.500h5.500V12H1zM7.500 7.500H13V12H7.500z" fill="#a9c6ea" stroke="#456" /></svg><i class="caret"></i></button>
  </div>
  <button class="assistant" aria-label="Assistant"><svg viewBox="0 0 14 14"><path d="M7 0a7 7 0 1 0 0 14h7V7a7 7 0 0 0-7-7z" fill="#0b0b0b"/><path d="M3 8c2-1 3-3 5-3M4.500 9.500C6.500 8.500 7 7 9.500 5v4" fill="none" stroke="#ddd" stroke-width="1.300"/></svg></button>
</main>

<footer class="timeline">
  <div class="scroll"><div class="thumb"></div></div>
  <div class="timeline-row">
    <div class="playback">
      <button aria-label="First"><svg viewBox="0 0 12 12"><path d="M2 1.500v9" stroke="#555" stroke-width="1.600"/><path d="M10 1.500v9L3 6z"/></svg></button>
      <button aria-label="Previous"><svg viewBox="0 0 12 12"><path d="M8 1.500v9L1 6z"/><path d="M10 4v4" stroke="#555" stroke-width="1.600"/></svg></button>
      <button aria-label="Play"><svg viewBox="0 0 12 12"><path d="M2 0v12l9-6z"/></svg></button>
      <button aria-label="Next"><svg viewBox="0 0 12 12"><path d="M4 1.500v9L11 6z"/><path d="M2 4v4" stroke="#555" stroke-width="1.600"/></svg></button>
      <button aria-label="Last"><svg viewBox="0 0 12 12"><path d="M2 1.500v9L9 6z"/><path d="M10 1.500v9" stroke="#555" stroke-width="1.600"/></svg></button>
    </div>
    <ol class="features" id="features"></ol>
    <button class="settings" aria-label="Timeline settings"><svg><use href="#i-gear"/></svg></button>
  </div>
</footer>
<script src="app.js"></script>
</body>
</html>
```
FILE: styles.css
```css
* { box-sizing: border-box; }
html, body { height: 100%; }
body {
  margin: 0;
  display: flex;
  flex-direction: column;
  overflow: hidden;
  background: #fff;
  color: #333;
  font-family: "Liberation Sans", sans-serif;
  font-size: 8px;
}
button {
  border: 0;
  padding: 0;
  margin: 0;
  background: none;
  font: inherit;
  color: inherit;
  display: flex;
  align-items: center;
  justify-content: center;
}
svg { display: block; flex: none; }
.sprite { position: absolute; width: 0; height: 0; }
.caret {
  border: 3px solid transparent;
  border-top: 4px solid #444;
  border-bottom: 0;
}

.titlebar { display: flex; align-items: center; height: 18px; padding: 0 2px; background: #f4f4f4; }
.app-icon { width: 11px; height: 13px; }
.window-title { margin: 0 0 0 4px; font: 9px/14px "Noto Sans", sans-serif; color: #777; flex: 1; }
.window-controls { display: flex; height: 14px; }
.window-controls button { width: 35px; }
.window-controls svg { width: 10px; height: 10px; fill: none; stroke: #888; }

.tabbar { display: flex; height: 24px; background: #c9c9c9; }
.quick { display: flex; gap: 13px; padding: 0 3px 0 5px; }
.quick button { gap: 3px; }
.quick svg { width: 12px; height: 12px; }
.faded { opacity: .5; }
.home-tab { width: 33px; margin-top: 3px; padding-top: 4px; background: #b9b9b9; border-radius: 3px 3px 0 0; }
.home-tab svg { width: 12px; height: 11px; }
.doc-tab { flex: 1; display: flex; align-items: center; margin-top: 3px; padding: 0 4px; background: #f2f2f2; border-radius: 3px 3px 0 0; }
.doc-name { flex: 1; display: flex; align-items: center; justify-content: center; gap: 4px; font: 9px "Noto Sans", sans-serif; }
.doc-name svg { width: 12px; height: 12px; }
.doc-close svg { width: 9px; height: 9px; }
.status { display: flex; align-items: center; gap: 10px; padding: 0 8px 0 3px; }
.status svg { width: 14px; height: 14px; }
.status .new-tab { width: 21px; height: 21px; margin-right: -2px; align-self: flex-end; background: #bababa; border-radius: 3px 3px 0 0; }
.status .new-tab svg { width: 11px; height: 11px; }
.status .jobs { width: 32px; height: 18px; gap: 4px; background: #999; color: #eee; border-radius: 3px; font-size: 9px; }
.status .avatar { width: 19px; height: 19px; margin-left: 3px; border-radius: 50%; background: #f2f2f2; color: #555; }

.ribbon { display: flex; gap: 4px; padding: 0 7px; background: #f2f2f2; border-bottom: 2px solid #e8e8e8; }
.workspace {
  flex: none;
  width: 85px;
  height: 47px;
  margin: 9px 0 8px;
  gap: 5px;
  border: 1px solid #ddd;
  border-radius: 4px;
  font: bold 8px Roboto, sans-serif;
}
.ribbon-main { flex: 1; min-width: 0; }
.ribbon-tabs { display: flex; gap: 16px; padding: 2px 9px 0; }
.ribbon-tabs a {
  height: 16px;
  padding: 0 10px;
  border-bottom: 2px solid transparent;
  color: #333;
  font: 8px/14px Roboto, sans-serif;
  text-decoration: none;
  white-space: nowrap;
}
.ribbon-tabs .active { color: #0a8fd6; border-color: #0a96d8; font-weight: bold; }
.groups { display: flex; padding-top: 1px; }
.group { display: flex; flex-direction: column; align-items: center; padding: 0 6px 0 7px; border-right: 1px solid #dadada; height: 42px; }
.group:last-child { border: 0; }
.tools { display: flex; gap: 5px; }
.tools svg { width: 28px; height: 28px; }
.tools .select { width: 30px; height: 30px; margin: -1px 0; background: #0a96d8; }
.tools .select svg { width: 30px; height: 30px; }
.group-label { gap: 2px; height: 16px; padding: 0 4px; color: #333; font: 8px/16px Roboto, sans-serif; }

.viewport { flex: 1; min-height: 0; position: relative; overflow: hidden; background: #fefefe; }
.scene { position: absolute; inset: 0; width: 100%; height: 100%; }
.grid-minor { stroke: #ebebeb; stroke-width: 1; }
.grid-major { stroke: #c8c8c8; stroke-width: 1; }
.grid-edge { fill: none; stroke: #777; stroke-width: 1.200; }
.grid-tick { stroke: #888; stroke-width: 1.500; stroke-dasharray: 4 1 2 1; }
.axis-red { stroke: #ff8c8c; }
.axis-green { stroke: #7dfa7d; }

.viewcube { position: absolute; top: 13px; right: 9px; width: 72px; height: 68px; }
.vc-face { font: bold 8px Roboto, sans-serif; fill: #999da3; }
.vc-side { font: bold 5px "Liberation Sans", sans-serif; fill: #8b8f96; }
.vc-axis { font: bold 9px "Liberation Sans", sans-serif; }

.browser { position: absolute; left: 2px; top: 3px; width: 231px; }
.panel-head { display: flex; align-items: center; height: 20px; padding: 0 8px 0 3px; background: #f2f2f2; border: 1px solid #d8d8d8; color: #555; font-family: Roboto, sans-serif; }
.panel-head span { flex: 1; }
.panel-head button svg { width: 8px; height: 8px; }
.collapse { width: 9px; height: 8px; margin-right: 6px; }
.comments { position: absolute; left: 2px; bottom: 3px; width: 231px; padding-left: 18px; }
.tree { list-style: none; margin: 3px 0 0; padding: 0; display: flex; flex-direction: column; justify-content: space-between; height: 127px; }
.tree li { display: flex; align-items: center; gap: 5px; height: 16px; padding-left: 26px; }
.tree .root { padding-left: 11px; gap: 6px; }
.root-tri { width: 10px; height: 10px; }
.tri { width: 10px; height: 12px; }
.row { display: flex; align-items: center; height: 15px; padding: 0 8px 0 2px; background: #f2f2f2; }
.root .row { padding: 0 4px 0 2px; gap: 4px; }
.eye { width: 13px; height: 10px; }
.row .eye + .folder { margin-left: 6px; }
.gear { width: 12px; height: 12px; }
.folder { width: 14px; height: 12px; }
.name { margin-left: 8px; }
.name.wide { margin-left: 10px; }
.selected { display: flex; align-items: center; gap: 10px; height: 13px; width: 146px; background: #959595; color: #fff; }
.selected b { overflow: hidden; white-space: nowrap; font: bold 9px Roboto, sans-serif; }
.part { width: 15px; height: 14px; }
.badge { width: 12px; height: 12px; }

.navbar { position: absolute; left: 50%; bottom: 6px; margin-left: -92px; height: 17px; display: flex; gap: 6px; padding: 0 2px; background: #f2f2f2; }
.navbar button { gap: 1px; }
.navbar svg { width: 14px; height: 14px; }
.navbar .caret { border-width: 3px 2px 0; }
.assistant { position: absolute; right: 8px; bottom: 6px; }
.assistant svg { width: 14px; height: 14px; }

.timeline { background: #f2f2f2; height: 37px; }
.scroll { height: 5px; padding: 0 2px; }
.thumb { width: 282px; max-width: 100%; height: 5px; border-radius: 2px; background: #c9c9c9; }
.timeline-row { display: flex; padding: 0 10px 0 6px; height: 32px; }
.playback { display: flex; align-items: center; gap: 7px; margin-right: 14px; }
.playback svg { width: 12px; height: 12px; fill: #444; }
.features { flex: 1; list-style: none; margin: 0; padding: 6px 0 0; display: flex; justify-content: space-between; height: 27px; }
.features li { flex: 1; display: flex; flex-direction: column; align-items: center; justify-content: space-between; border-bottom: 1px solid #bbb; }
.features svg { width: 14px; height: 14px; }
.features i { width: 1px; height: 4px; background: #bbb; }
.settings { margin-left: 15px; }
.settings svg { width: 13px; height: 13px; }
```
FILE: app.js
```js
const icon = (id) => `<svg viewBox="0 0 28 28"><use href="#i-${id}"/></svg>`;

// Ribbon tool groups
const groups = [
  ['CREATE', ['sketch', 'extrude', 'revolve', 'hole', 'pattern', 'form']],
  ['AUTOMATE', ['automate']],
  ['MODIFY', ['presspull', 'fillet', 'shell', 'combine', 'split', 'move']],
  ['ASSEMBLE', ['component', 'joint', 'bom']],
  ['CONFIGURE', ['config', 'table']],
  ['CONSTRUCT', ['plane']],
  ['INSPECT', ['measure']],
  ['INSERT', ['derive', 'fastener', 'image']],
  ['SELECT', ['select']],
];
const selectIcon = '<svg viewBox="0 0 30 30"><path d="M3.500 3.500h20v16h-20z" fill="none" stroke="#63d0a0" stroke-dasharray="3 1.500"/><path d="M18 14v12l3-2.500 2 4 2-1-2-4h4z" fill="#fff"/></svg>';
document.getElementById('groups').innerHTML = groups.map(([label, tools]) => `
  <div class="group"><div class="tools">${tools.map((t) => t === 'select'
    ? `<button class="select" aria-label="Select">${selectIcon}</button>`
    : `<button aria-label="${t}">${icon(t)}</button>`).join('')}</div>
  <button class="group-label">${label}<i class="caret"></i></button></div>`).join('');

// Feature history
const history = 'cyl cyl shell extrude extrude thread cyl combine extrude frame frame cyl cyl cyl cyl shell extrude fillet fillet cyl extrude extrude frame fillet cube cube cube move move hole cyl cyl hole cube cube move asbuilt move combine hole cube cube fillet fillet move move move move combine combine extrude hole';
document.getElementById('features').innerHTML = history.split(' ').map((f) => `<li>${icon(f)}<i></i></li>`).join('');

// Ground grid, interpolated between its four corners
const A = [276, 462], B = [1053, 527], C = [-81, 603], D = [705, 671];
const at = (u, v) => [0, 1].map((k) =>
  (A[k] * (1 - u) + B[k] * u) * (1 - v) + (C[k] * (1 - u) + D[k] * u) * v);
const line = (cls, p, q) => `<line class="${cls}" x1="${p[0]}" y1="${p[1]}" x2="${q[0]}" y2="${q[1]}"/>`;
const U0 = 0.508, DU = 0.0845, V0 = 0.4875, DV = 0.0851;
const minor = [], major = [], ticks = [];
for (let i = -30; i <= 30; i++) {
  const u = U0 + i * DU / 5, v = V0 + i * DV / 5;
  const isMajor = i % 5 === 0;
  const cls = isMajor ? 'grid-major' : 'grid-minor';
  const out = isMajor ? major : minor;
  if (u > 0 && u < 1) out.push(line(i ? cls : 'axis-red', at(u, 0), at(u, 1)));
  if (v > 0 && v < 1) out.push(line(i ? cls : 'axis-green', at(0, v), at(1, v)));
  if (isMajor && u > 0.02 && u < 0.98) {
    const p = at(u, 0);
    ticks.push(line('grid-tick', p, [p[0] + 10, p[1] - 3]));
  }
  if (isMajor && v > 0) {
    const p = at(1, v);
    ticks.push(line('grid-tick', p, [p[0] - 15, p[1] - 2]));
  }
}
const edge = `<polygon class="grid-edge" points="${[A, B, D, C].map((p) => p.join(',')).join(' ')}"/>`;
document.getElementById('grid').innerHTML = minor.join('') + major.join('') + ticks.join('') + edge;
```
